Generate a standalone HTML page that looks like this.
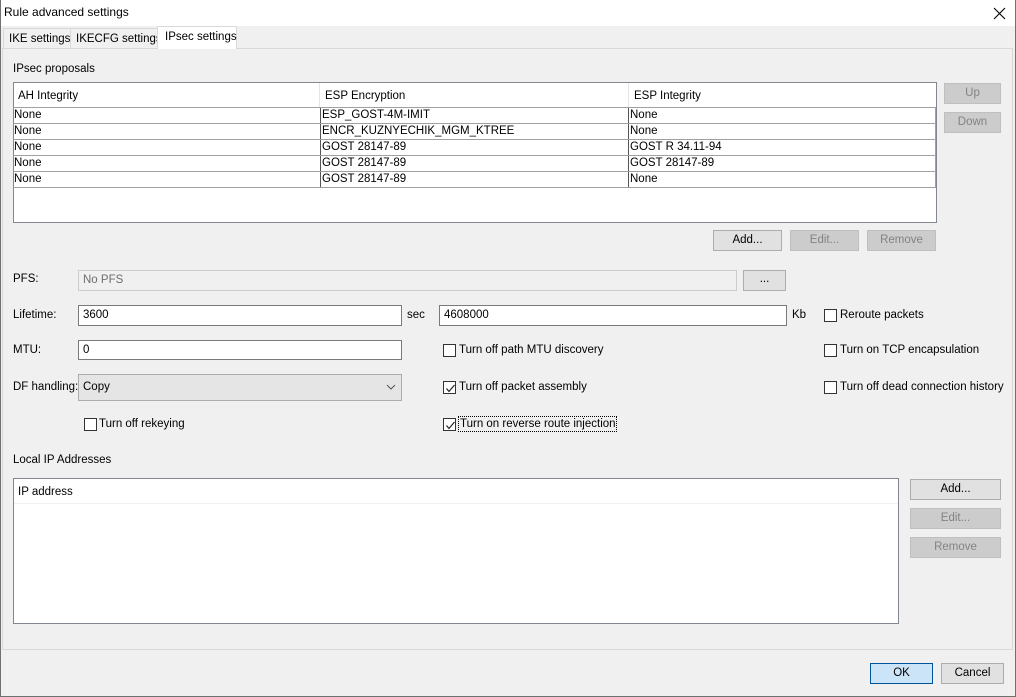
<!DOCTYPE html>
<html><head><meta charset="utf-8"><style>
*{box-sizing:border-box;margin:0;padding:0}
body{width:1016px;height:697px;background:#f0f0f0;font-family:"Liberation Sans",sans-serif;font-size:11.5px;color:#000;position:relative;overflow:hidden}
.a{position:absolute;white-space:nowrap}
.win{position:absolute;left:0;top:0;width:1016px;height:697px;border:1px solid #707070;border-top:none}
.title{position:absolute;left:0;top:0;width:1016px;height:26px;background:#fff}
.btn{position:absolute;border:1px solid #adadad;background:#e1e1e1;text-align:center;line-height:19px}
.dis{background:#cccccc;border-color:#bfbfbf;color:#838383}
.field{position:absolute;background:#fff;border:1px solid #7a7a7a;padding-left:4px;line-height:18px}
.cb{position:absolute;width:13px;height:13px;border:1px solid #333;background:#fff}
.cb svg{position:absolute;left:1px;top:1px}
.row{position:absolute;left:13px;width:923px;height:17px;border:1px solid #a0a0a0;border-left:1px solid #828790;line-height:15px}
.row span{position:absolute;top:0}
</style></head><body>
<div class="title"></div>
<div class="a" style="left:4px;top:5px;font-size:12px">Rule advanced settings</div>
<svg class="a" style="left:993px;top:7px" width="13" height="13"><path d="M1 1L12 12M12 1L1 12" stroke="#000" stroke-width="1.1"/></svg>
<div class="win"></div>
<!-- tabs -->
<div class="a" style="left:3px;top:28px;width:68px;height:21px;border:1px solid #d9d9d9;background:#f0f0f0;padding:4px 0 0 5px">IKE settings</div>
<div class="a" style="left:70px;top:28px;width:88px;height:21px;border:1px solid #d9d9d9;background:#f0f0f0;padding:4px 0 0 5px">IKECFG settings</div>
<div class="a" style="left:157px;top:26px;width:80px;height:23px;border:1px solid #d9d9d9;border-bottom:none;background:#fff;padding:4px 0 0 7px;z-index:2">IPsec settings</div>
<div class="a" style="left:2px;top:48px;width:1011px;height:602px;border:1px solid #d9d9d9;background:#f0f0f0"></div>
<div class="a" style="left:13px;top:63px">IPsec proposals</div>
<!-- proposals table -->
<div class="a" style="left:13px;top:82px;width:924px;height:141px;border:1px solid #828790;background:#fff"></div>
<div class="a" style="left:18px;top:90px">AH Integrity</div>
<div class="a" style="left:319px;top:83px;width:1px;height:24px;background:#e5e5e5"></div>
<div class="a" style="left:325px;top:90px">ESP Encryption</div>
<div class="a" style="left:628px;top:83px;width:1px;height:24px;background:#e5e5e5"></div>
<div class="a" style="left:634px;top:90px">ESP Integrity</div>
<div class="a" style="left:14px;top:107px;width:922px;height:1px;background:#f0f0f0"></div>
<div class="row" style="top:107px"><span style="left:0">None</span><span style="left:306px;border-left:1px solid #555;padding-left:1px;height:15px">ESP_GOST-4M-IMIT</span><span style="left:614px;border-left:1px solid #555;padding-left:1px;height:15px">None</span></div>
<div class="row" style="top:123px"><span style="left:0">None</span><span style="left:306px;border-left:1px solid #555;padding-left:1px;height:15px">ENCR_KUZNYECHIK_MGM_KTREE</span><span style="left:614px;border-left:1px solid #555;padding-left:1px;height:15px">None</span></div>
<div class="row" style="top:139px"><span style="left:0">None</span><span style="left:306px;border-left:1px solid #555;padding-left:1px;height:15px">GOST 28147-89</span><span style="left:614px;border-left:1px solid #555;padding-left:1px;height:15px">GOST R 34.11-94</span></div>
<div class="row" style="top:155px"><span style="left:0">None</span><span style="left:306px;border-left:1px solid #555;padding-left:1px;height:15px">GOST 28147-89</span><span style="left:614px;border-left:1px solid #555;padding-left:1px;height:15px">GOST 28147-89</span></div>
<div class="row" style="top:171px"><span style="left:0">None</span><span style="left:306px;border-left:1px solid #555;padding-left:1px;height:15px">GOST 28147-89</span><span style="left:614px;border-left:1px solid #555;padding-left:1px;height:15px">None</span></div>
<div class="btn dis" style="left:944px;top:83px;width:57px;height:21px">Up</div>
<div class="btn dis" style="left:944px;top:112px;width:57px;height:21px">Down</div>
<div class="btn" style="left:713px;top:230px;width:69px;height:21px">Add...</div>
<div class="btn dis" style="left:790px;top:230px;width:69px;height:21px">Edit...</div>
<div class="btn dis" style="left:867px;top:230px;width:69px;height:21px">Remove</div>
<!-- PFS -->
<div class="a" style="left:13px;top:273px">PFS:</div>
<div class="field" style="left:78px;top:270px;width:659px;height:21px;background:#f0f0f0;border-color:#ccc;color:#6d6d6d">No PFS</div>
<div class="btn" style="left:743px;top:270px;width:43px;height:21px;line-height:17px">...</div>
<div class="a" style="left:13px;top:309px">Lifetime:</div>
<div class="field" style="left:78px;top:305px;width:324px;height:21px">3600</div>
<div class="a" style="left:407px;top:309px">sec</div>
<div class="field" style="left:439px;top:305px;width:348px;height:21px">4608000</div>
<div class="a" style="left:792px;top:309px">Kb</div>
<div class="cb" style="left:824px;top:309px"></div><div class="a" style="left:840px;top:309px">Reroute packets</div>
<div class="a" style="left:13px;top:344px">MTU:</div>
<div class="field" style="left:78px;top:340px;width:324px;height:20px">0</div>
<div class="cb" style="left:443px;top:344px"></div><div class="a" style="left:459px;top:344px">Turn off path MTU discovery</div>
<div class="cb" style="left:824px;top:344px"></div><div class="a" style="left:840px;top:344px">Turn on TCP encapsulation</div>
<div class="a" style="left:13px;top:381px">DF handling:</div>
<div class="field" style="left:78px;top:374px;width:324px;height:27px;background:#e5e5e5;border-color:#adadad;line-height:25px">Copy</div>
<svg class="a" style="left:386px;top:384px" width="10" height="6"><path d="M1 1L5 5L9 1" stroke="#555" fill="none"/></svg>
<div class="cb" style="left:443px;top:381px"><svg width="11" height="11"><path d="M1.5 5.5L4 8.5L9.5 2" stroke="#222" fill="none" stroke-width="1.2"/></svg></div><div class="a" style="left:459px;top:381px">Turn off packet assembly</div>
<div class="cb" style="left:824px;top:381px"></div><div class="a" style="left:840px;top:381px">Turn off dead connection history</div>
<div class="cb" style="left:84px;top:418px"></div><div class="a" style="left:99px;top:418px">Turn off rekeying</div>
<div class="cb" style="left:443px;top:418px"><svg width="11" height="11"><path d="M1.5 5.5L4 8.5L9.5 2" stroke="#222" fill="none" stroke-width="1.2"/></svg></div><div class="a" style="left:458px;top:416px;border:1px dotted #000;padding:1px 0 1px 1px">Turn on reverse route injection</div>
<div class="a" style="left:13px;top:454px">Local IP Addresses</div>
<div class="a" style="left:13px;top:478px;width:886px;height:146px;border:1px solid #828790;background:#fff"></div>
<div class="a" style="left:18px;top:486px">IP address</div>
<div class="a" style="left:14px;top:503px;width:884px;height:1px;background:#f0f0f0"></div>
<div class="btn" style="left:910px;top:479px;width:91px;height:21px">Add...</div>
<div class="btn dis" style="left:910px;top:508px;width:91px;height:21px">Edit...</div>
<div class="btn dis" style="left:910px;top:537px;width:91px;height:21px">Remove</div>
<div class="btn" style="left:870px;top:663px;width:63px;height:21px;background:#cce4f7;border-color:#005499">OK</div>
<div class="btn" style="left:941px;top:663px;width:63px;height:21px">Cancel</div>
</body></html>
